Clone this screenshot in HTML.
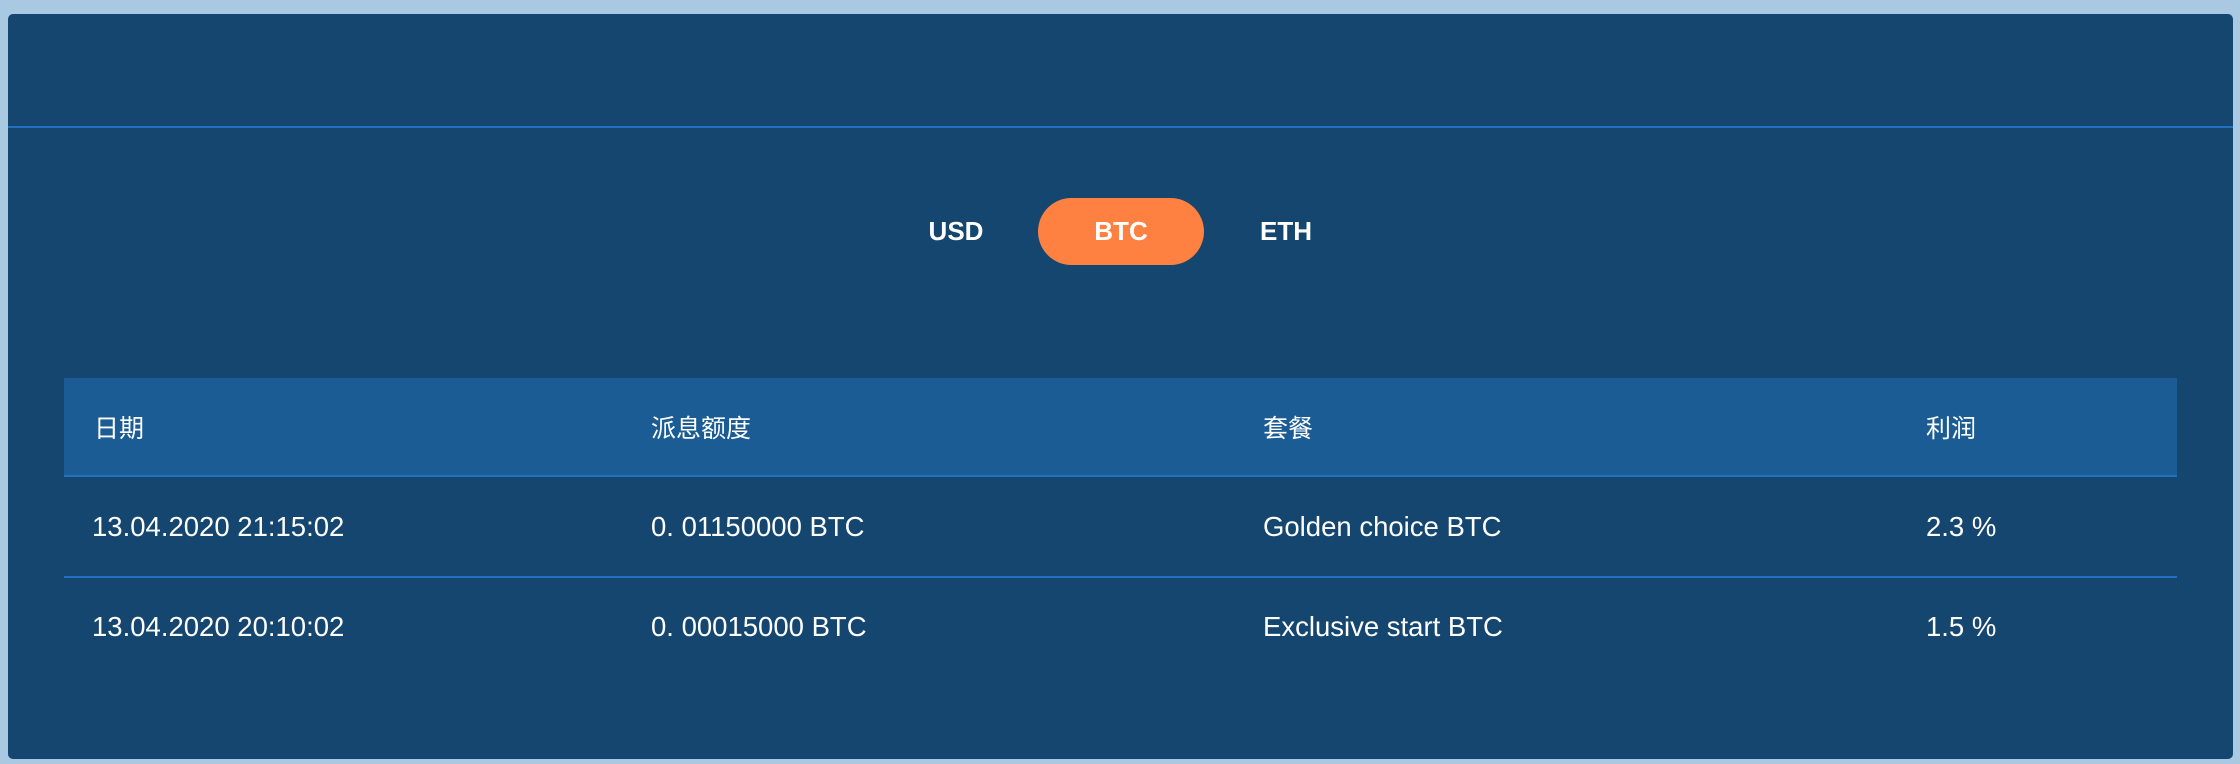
<!DOCTYPE html>
<html><head><meta charset="utf-8"><style>
*{margin:0;padding:0;box-sizing:border-box}
body{width:2240px;height:764px;background:#a9c9e2;position:relative;overflow:hidden;font-family:"Liberation Sans","Noto Sans CJK SC",sans-serif;color:#fff}
.panel{position:absolute;left:8px;top:14px;width:2225px;height:745px;background:#14466f;border-radius:5px}
.hr{position:absolute;left:8px;top:126px;width:2225px;height:2px;background:#2270c0}
.tab{position:absolute;top:198px;height:67px;line-height:67px;font-weight:bold;font-size:26px;text-align:center}
.pill{background:#fe8142;border-radius:34px}
.thead{position:absolute;left:64px;top:378px;width:2113px;height:99px;background:#1a5c93;border-bottom:2px solid #2270c0}
.line{position:absolute;left:64px;width:2113px;height:2px;background:#2270c0}
.c{position:absolute;font-size:27.5px;white-space:nowrap;transform:translateY(-50%)}
.h{font-size:25px}
</style></head><body>
<div class="panel"></div>
<div class="hr"></div>
<div class="tab" style="left:916px;width:80px">USD</div>
<div class="tab pill" style="left:1038px;width:166px">BTC</div>
<div class="tab" style="left:1246px;width:80px">ETH</div>
<div class="thead"></div>
<div class="line" style="top:576px"></div>
<div class="c h" style="left:94px;top:427px">日期</div>
<div class="c h" style="left:651px;top:427px">派息额度</div>
<div class="c h" style="left:1263px;top:427px">套餐</div>
<div class="c h" style="left:1926px;top:427px">利润</div>
<div class="c" style="left:92px;top:527px">13.04.2020 21:15:02</div>
<div class="c" style="left:651px;top:527px">0. 01150000 BTC</div>
<div class="c" style="left:1263px;top:527px">Golden choice BTC</div>
<div class="c" style="left:1926px;top:527px">2.3 %</div>
<div class="c" style="left:92px;top:627px">13.04.2020 20:10:02</div>
<div class="c" style="left:651px;top:627px">0. 00015000 BTC</div>
<div class="c" style="left:1263px;top:627px">Exclusive start BTC</div>
<div class="c" style="left:1926px;top:627px">1.5 %</div>
</body></html>
